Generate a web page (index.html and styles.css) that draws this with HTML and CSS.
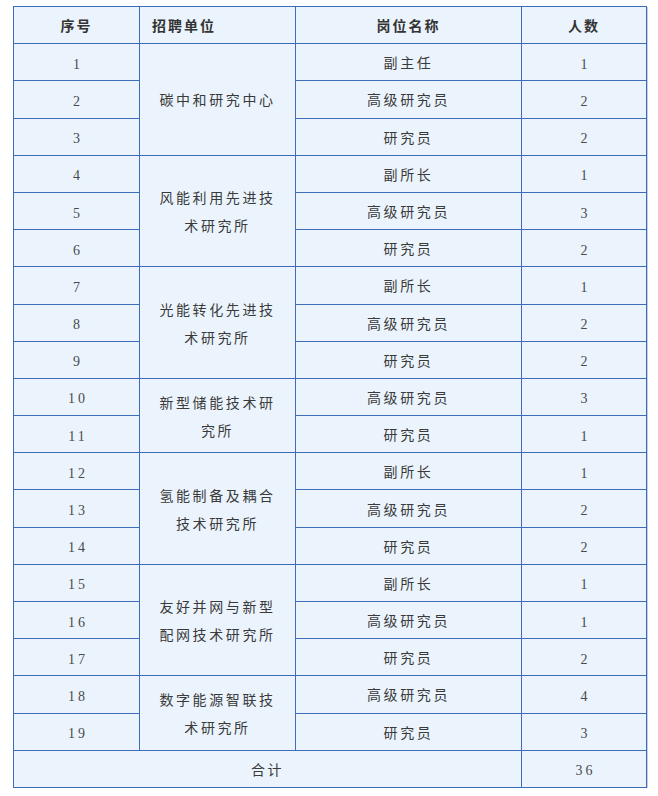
FILE: index.html
```html
<!DOCTYPE html>
<html lang="zh">
<head>
<meta charset="utf-8">
<link rel="stylesheet" href="styles.css">
</head>
<body>
<div class="wrap">
<table class="jobs">
<colgroup>
<col class="c1"><col class="c2"><col class="c3"><col class="c4">
</colgroup>
<thead>
<tr><th>序号</th><th class="left">招聘单位</th><th>岗位名称</th><th>人数</th></tr>
</thead>
<tbody>
<tr><td class="num">1</td><td class="unit" rowspan="3">碳中和研究中心</td><td>副主任</td><td class="num">1</td></tr>
<tr><td class="num">2</td><td>高级研究员</td><td class="num">2</td></tr>
<tr><td class="num">3</td><td>研究员</td><td class="num">2</td></tr>
<tr><td class="num">4</td><td class="unit" rowspan="3">风能利用先进技术研究所</td><td>副所长</td><td class="num">1</td></tr>
<tr><td class="num">5</td><td>高级研究员</td><td class="num">3</td></tr>
<tr><td class="num">6</td><td>研究员</td><td class="num">2</td></tr>
<tr><td class="num">7</td><td class="unit" rowspan="3">光能转化先进技术研究所</td><td>副所长</td><td class="num">1</td></tr>
<tr><td class="num">8</td><td>高级研究员</td><td class="num">2</td></tr>
<tr><td class="num">9</td><td>研究员</td><td class="num">2</td></tr>
<tr><td class="num">10</td><td class="unit" rowspan="2">新型储能技术研究所</td><td>高级研究员</td><td class="num">3</td></tr>
<tr><td class="num">11</td><td>研究员</td><td class="num">1</td></tr>
<tr><td class="num">12</td><td class="unit" rowspan="3">氢能制备及耦合技术研究所</td><td>副所长</td><td class="num">1</td></tr>
<tr><td class="num">13</td><td>高级研究员</td><td class="num">2</td></tr>
<tr><td class="num">14</td><td>研究员</td><td class="num">2</td></tr>
<tr><td class="num">15</td><td class="unit" rowspan="3">友好并网与新型配网技术研究所</td><td>副所长</td><td class="num">1</td></tr>
<tr><td class="num">16</td><td>高级研究员</td><td class="num">1</td></tr>
<tr><td class="num">17</td><td>研究员</td><td class="num">2</td></tr>
<tr><td class="num">18</td><td class="unit" rowspan="2">数字能源智联技术研究所</td><td>高级研究员</td><td class="num">4</td></tr>
<tr><td class="num">19</td><td>研究员</td><td class="num">3</td></tr>
<tr><td colspan="3">合计</td><td class="num">36</td></tr>
</tbody>
</table>
</div>
</body>
</html>
```

FILE: styles.css
```css
html, body {
  margin: 0;
  padding: 0;
  background: #ffffff;
}
.wrap {
  padding: 6px 12px 0 13px;
}
.jobs {
  width: 633px;
  border-collapse: collapse;
  table-layout: fixed;
  background: #ebf4fd;
  box-shadow: 1px 1px 0 #c9cfd6;
  font-family: "Noto Sans CJK SC", "Noto Sans", sans-serif;
  font-size: 14px;
  color: #3a3a3a;
}
.c1 { width: 126px; }
.c2 { width: 156px; }
.c3 { width: 226px; }
.c4 { width: 125px; }
.jobs th,
.jobs td {
  border: 1px solid #3d6cb9;
  height: 36.2px;
  padding: 0 12px;
  text-align: center;
  vertical-align: middle;
  letter-spacing: 2.6px;
  line-height: 20px;
}
.jobs th {
  font-weight: bold;
  color: #333333;
  letter-spacing: 2px;
}
.jobs th.left {
  text-align: left;
}
.jobs td.unit {
  line-height: 28px;
  padding: 0 12px;
}
.jobs td.num {
  font-family: "Liberation Serif", "DejaVu Serif", serif;
  font-size: 14px;
  color: #4a4a4a;
  letter-spacing: 3px;
  height: 31.2px;
  padding: 5px 12px 0 15px;
}
```
